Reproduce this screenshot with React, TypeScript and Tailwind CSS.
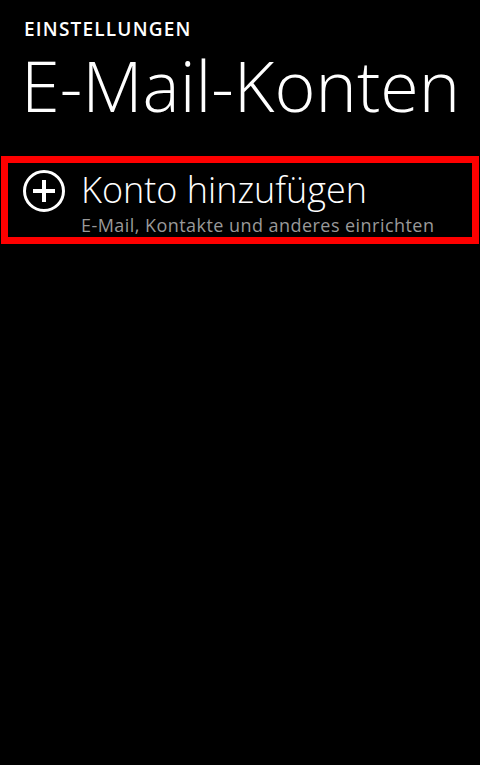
export default function App() {
  return (
    <div className="min-h-screen w-full bg-black text-white font-['Open_Sans',sans-serif]">
      <header className="pl-6 pt-[20px]">
        <p className="text-[19px] font-semibold leading-[19px] tracking-[1.2px]">EINSTELLUNGEN</p>
        <h1 className="mt-[11px] text-[70px] font-light leading-[70px] -ml-[3px]">E-Mail-Konten</h1>
      </header>

      <div className="mt-[36px] ml-px w-[478px] border-[7px] border-[#ff0000]">
        <div className="flex items-start gap-[16px] pl-[15px] pt-[7px]">
          <svg viewBox="0 0 42 42" className="h-[42px] w-[42px] shrink-0" fill="none" stroke="currentColor">
            <circle cx="21" cy="21" r="19.5" strokeWidth="3" />
            <path d="M10 21H32M21 10V32" strokeWidth="4" />
          </svg>
          <div className="flex flex-col">
            <span className="text-[36px] font-light leading-[40px]">Konto hinzufügen</span>
            <span className="mt-[3px] text-[18px] leading-[24px] tracking-[0.45px] text-[#999999]">E-Mail, Kontakte und anderes einrichten</span>
          </div>
        </div>
      </div>
    </div>
  );
}
